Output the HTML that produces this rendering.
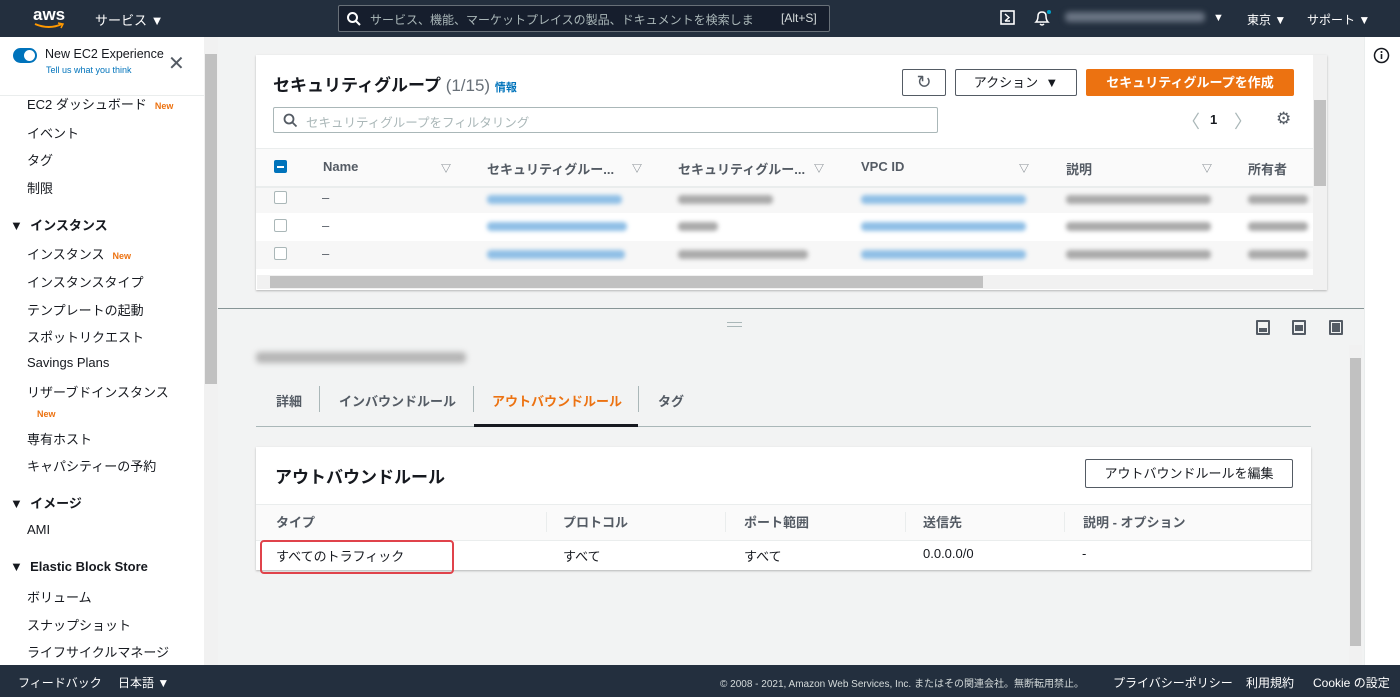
<!DOCTYPE html><html><head><meta charset="utf-8"><style>
*{box-sizing:border-box;margin:0;padding:0}
body{width:1400px;height:697px;overflow:hidden;font-family:"Liberation Sans","Noto Sans CJK JP",sans-serif;font-size:13px;color:#16191f;background:#f2f3f3;position:relative}
.a{position:absolute;white-space:nowrap}
.nav{left:0;top:0;width:1400px;height:37px;background:#232f3e;color:#fff}
.foot{left:0;top:665px;width:1400px;height:32px;background:#232f3e;color:#fff;font-size:12px}
.side{left:0;top:37px;width:204px;height:628px;background:#fff}
.side div{position:absolute;left:27px;font-size:13px;color:#16191f;white-space:nowrap}
.side .h{left:10px;font-weight:bold}
.side .new,.new{color:#ec7211;font-size:9px;margin-left:8px;font-weight:bold}
.card{background:#fff;box-shadow:0 1px 2px rgba(0,0,0,.25)}
.btn{position:absolute;border:1px solid #545b64;background:#fff;border-radius:2px;font-size:13px;font-weight:bold;color:#545b64;text-align:center}
.th{position:absolute;top:159px;font-weight:bold;color:#545b64;font-size:13px;white-space:nowrap}
.blur{position:absolute;height:9px;border-radius:4px;filter:blur(2px)}
.cb{position:absolute;left:274px;width:13px;height:13px;border:1px solid #aab7b8;border-radius:2px;background:#fff}
.tab{position:absolute;top:391px;font-weight:bold;color:#545b64;font-size:13px}
.col{position:absolute;top:512px;font-weight:bold;color:#545b64;font-size:13px}
</style></head><body>
<div class="a nav">
 <div class="a" style="left:33px;top:5px;font-size:17px;font-weight:bold">aws</div>
 <svg class="a" style="left:33px;top:22px" width="32" height="8"><path d="M2 2 Q16 8 29 2" stroke="#ff9900" stroke-width="2" fill="none"/><path d="M25 1 L30 2 L28 6" stroke="#ff9900" stroke-width="1.5" fill="none"/></svg>
 <div class="a" style="left:95px;top:10px;font-size:13px">サービス ▼</div>
 <div class="a" style="left:338px;top:5px;width:492px;height:27px;border:1px solid #687078;border-radius:2px;background:#161e2d"></div>
 <svg class="a" style="left:346px;top:11px" width="16" height="16"><circle cx="6.5" cy="6.5" r="4.5" stroke="#fff" stroke-width="2" fill="none"/><path d="M10 10 L14 14" stroke="#fff" stroke-width="2"/></svg>
 <div class="a" style="left:370px;top:11px;font-size:12px;color:#aab7b8;width:405px;overflow:hidden">サービス、機能、マーケットプレイスの製品、ドキュメントを検索しま</div>
 <div class="a" style="left:781px;top:11px;font-size:12px;color:#d5dbdb">[Alt+S]</div>
 <svg class="a" style="left:1000px;top:10px" width="16" height="16"><rect x="1" y="1" width="13" height="13" stroke="#fff" stroke-width="1.6" fill="none"/><path d="M5 4 L9 7.5 L5 11 M5 11h5" stroke="#fff" stroke-width="1.4" fill="none"/></svg>
 <svg class="a" style="left:1032px;top:8px" width="20" height="20"><path d="M4 14 Q6 12 6 8 Q6 4 10 4 Q14 4 14 8 Q14 12 16 14 Z M8 16 Q10 18 12 16" stroke="#fff" stroke-width="1.5" fill="none"/><circle cx="17" cy="4" r="2" fill="#00a1c9"/></svg>
 <div class="a" style="left:1065px;top:12px;width:140px;height:10px;background:#6b7584;filter:blur(3px);border-radius:4px"></div>
 <div class="a" style="left:1213px;top:12px;font-size:11px">▼</div>
 <div class="a" style="left:1247px;top:11px;font-size:12px">東京 ▼</div>
 <div class="a" style="left:1307px;top:11px;font-size:12px">サポート ▼</div>
</div>
<div class="a side">
 <div style="left:13px;top:11px;width:24px;height:15px;background:#0073bb;border-radius:8px"><span style="position:absolute;right:2px;top:2px;width:11px;height:11px;border-radius:50%;background:#fff"></span></div>
 <div style="left:45px;top:10px;font-size:12.5px">New EC2 Experience</div>
 <div style="left:46px;top:28px;font-size:9px;color:#0073bb">Tell us what you think</div>
 <div style="left:168px;top:14px;font-size:20px;color:#545b64">✕</div>
 <div style="left:0;top:58px;width:204px;height:1px;background:#eaeded"></div>
 <div style="top:57px">EC2 ダッシュボード<span class="new">New</span></div>
 <div style="top:86px">イベント</div>
 <div style="top:113px">タグ</div>
 <div style="top:141px">制限</div>
 <div class="h" style="top:178px">▼ &nbsp;インスタンス</div>
 <div style="top:207px">インスタンス<span class="new">New</span></div>
 <div style="top:235px">インスタンスタイプ</div>
 <div style="top:263px">テンプレートの起動</div>
 <div style="top:290px">スポットリクエスト</div>
 <div style="top:318px">Savings Plans</div>
 <div style="top:345px">リザーブドインスタンス</div>
 <div style="top:368px;left:29px"><span class="new">New</span></div>
 <div style="top:392px">専有ホスト</div>
 <div style="top:419px">キャパシティーの予約</div>
 <div class="h" style="top:456px">▼ &nbsp;イメージ</div>
 <div style="top:485px">AMI</div>
 <div class="h" style="top:522px">▼ &nbsp;Elastic Block Store</div>
 <div style="top:550px">ボリューム</div>
 <div style="top:578px">スナップショット</div>
 <div style="top:605px">ライフサイクルマネージ</div>
</div>
<div class="a" style="left:204px;top:37px;width:14px;height:628px;background:#f1f1f1"></div>
<div class="a" style="left:205px;top:54px;width:12px;height:330px;background:#c1c1c1"></div>
<div class="a" style="left:1364px;top:37px;width:36px;height:628px;background:#fff;border-left:1px solid #eaeded"></div>
<svg class="a" style="left:1373px;top:47px" width="17" height="17"><circle cx="8.5" cy="8.5" r="7" stroke="#16191f" stroke-width="1.5" fill="none"/><rect x="7.7" y="7" width="1.6" height="5" fill="#16191f"/><circle cx="8.5" cy="5" r="1" fill="#16191f"/></svg>
<div class="a card" style="left:256px;top:55px;width:1071px;height:235px"></div>
<div class="a" style="left:1313px;top:55px;width:14px;height:235px;background:#f1f1f1"></div>
<div class="a" style="left:1314px;top:100px;width:12px;height:86px;background:#c1c1c1"></div>
<div class="a" style="left:273px;top:71px;font-size:17px;font-weight:bold">セキュリティグループ <span style="font-weight:normal;color:#687078">(1/15)</span> <span style="font-size:11px;color:#0073bb">情報</span></div>
<div class="btn" style="left:902px;top:69px;width:44px;height:27px;line-height:25px;font-size:18px;font-weight:normal">↻</div>
<div class="btn" style="left:955px;top:69px;width:122px;height:27px;line-height:25px;font-weight:normal;color:#16191f">アクション &nbsp;▼</div>
<div class="btn" style="left:1086px;top:69px;width:208px;height:27px;line-height:25px;background:#ec7211;border-color:#ec7211;color:#fff">セキュリティグループを作成</div>
<div class="a" style="left:273px;top:107px;width:665px;height:26px;border:1px solid #aab7b8;border-radius:2px;background:#fff"></div>
<svg class="a" style="left:283px;top:113px" width="15" height="15"><circle cx="6" cy="6" r="4.5" stroke="#545b64" stroke-width="1.8" fill="none"/><path d="M9.5 9.5 L13.5 13.5" stroke="#545b64" stroke-width="1.8"/></svg>
<div class="a" style="left:306px;top:112px;font-size:12.5px;color:#aab7b8">セキュリティグループをフィルタリング</div>
<div class="a" style="left:1182px;top:108px;font-size:18px;color:#aab7b8">〈</div>
<div class="a" style="left:1210px;top:112px;font-weight:bold;font-size:13px">1</div>
<div class="a" style="left:1234px;top:108px;font-size:18px;color:#aab7b8">〉</div>
<div class="a" style="left:1276px;top:109px;font-size:17px;color:#545b64">⚙</div>
<div class="a" style="left:256px;top:148px;width:1057px;height:40px;background:#fafafa;border-bottom:2px solid #eaeded;border-top:1px solid #eaeded"></div>
<div class="a" style="left:274px;top:160px;width:13px;height:13px;background:#0073bb;border-radius:2px"><span style="position:absolute;left:3px;top:5.5px;width:7px;height:2px;background:#fff"></span></div>
<div class="th" style="left:323px">Name</div><div class="a" style="left:441px;top:160px;font-size:10px;color:#687078">▽</div>
<div class="th" style="left:487px">セキュリティグルー...</div><div class="a" style="left:632px;top:160px;font-size:10px;color:#687078">▽</div>
<div class="th" style="left:678px">セキュリティグルー...</div><div class="a" style="left:814px;top:160px;font-size:10px;color:#687078">▽</div>
<div class="th" style="left:861px">VPC ID</div><div class="a" style="left:1019px;top:160px;font-size:10px;color:#687078">▽</div>
<div class="th" style="left:1066px">説明</div><div class="a" style="left:1202px;top:160px;font-size:10px;color:#687078">▽</div>
<div class="th" style="left:1248px">所有者</div>
<div class="a" style="left:256px;top:213px;width:1057px;height:28px;background:#fff"></div>
<div class="a" style="left:256px;top:188px;width:1057px;height:25px;background:#f7f7f7"></div>
<div class="a" style="left:256px;top:241px;width:1057px;height:28px;background:#f7f7f7"></div>
<div class="cb" style="top:191px"></div><div class="cb" style="top:219px"></div><div class="cb" style="top:247px"></div>
<div class="a" style="left:322px;top:190px;color:#545b64">–</div><div class="a" style="left:322px;top:218px;color:#545b64">–</div><div class="a" style="left:322px;top:246px;color:#545b64">–</div>
<div class="blur" style="left:487px;top:195px;width:135px;background:#8fbfe6"></div>
<div class="blur" style="left:487px;top:222px;width:140px;background:#8fbfe6"></div>
<div class="blur" style="left:487px;top:250px;width:138px;background:#8fbfe6"></div>
<div class="blur" style="left:678px;top:195px;width:95px;background:#aaa"></div>
<div class="blur" style="left:678px;top:222px;width:40px;background:#aaa"></div>
<div class="blur" style="left:678px;top:250px;width:130px;background:#aaa"></div>
<div class="blur" style="left:861px;top:195px;width:165px;background:#8fbfe6"></div>
<div class="blur" style="left:861px;top:222px;width:165px;background:#8fbfe6"></div>
<div class="blur" style="left:861px;top:250px;width:165px;background:#8fbfe6"></div>
<div class="blur" style="left:1066px;top:195px;width:145px;background:#aaa"></div>
<div class="blur" style="left:1066px;top:222px;width:145px;background:#aaa"></div>
<div class="blur" style="left:1066px;top:250px;width:145px;background:#aaa"></div>
<div class="blur" style="left:1248px;top:195px;width:60px;background:#aaa"></div>
<div class="blur" style="left:1248px;top:222px;width:60px;background:#aaa"></div>
<div class="blur" style="left:1248px;top:250px;width:60px;background:#aaa"></div>
<div class="a" style="left:257px;top:275px;width:1056px;height:14px;background:#f1f1f1"></div>
<div class="a" style="left:270px;top:276px;width:713px;height:12px;background:#c1c1c1"></div>
<div class="a" style="left:218px;top:308px;width:1146px;height:1px;background:#879596"></div>
<div class="a" style="left:727px;top:322px;width:15px;height:5px;border-top:1px solid #aab7b8;border-bottom:1px solid #aab7b8"></div>
<div class="a" style="left:1256px;top:320px;width:14px;height:15px;border:2px solid #545b64;border-radius:1px"><span style="position:absolute;left:1px;bottom:1px;width:8px;height:4px;background:#545b64"></span></div>
<div class="a" style="left:1292px;top:320px;width:14px;height:15px;border:2px solid #545b64;border-radius:1px"><span style="position:absolute;left:1px;top:3px;width:8px;height:6px;background:#545b64"></span></div>
<div class="a" style="left:1329px;top:320px;width:14px;height:15px;border:2px solid #545b64;border-radius:1px"><span style="position:absolute;left:1px;top:1px;width:8px;height:9px;background:#545b64"></span></div>
<div class="a" style="left:1349px;top:345px;width:13px;height:320px;background:#f1f1f1"></div>
<div class="a" style="left:1350px;top:358px;width:11px;height:288px;background:#c1c1c1"></div>
<div class="a" style="left:256px;top:352px;width:210px;height:11px;background:#b5b5b5;filter:blur(3px);border-radius:4px"></div>
<div class="a" style="left:256px;top:426px;width:1055px;height:1px;background:#aab7b8"></div>
<div class="tab" style="left:276px">詳細</div>
<div class="a" style="left:319px;top:386px;width:1px;height:26px;background:#aab7b8"></div>
<div class="tab" style="left:339px">インバウンドルール</div>
<div class="a" style="left:473px;top:386px;width:1px;height:26px;background:#aab7b8"></div>
<div class="tab" style="left:492px;color:#ec7211">アウトバウンドルール</div>
<div class="a" style="left:474px;top:424px;width:164px;height:3px;background:#16191f"></div>
<div class="a" style="left:638px;top:386px;width:1px;height:26px;background:#aab7b8"></div>
<div class="tab" style="left:658px">タグ</div>
<div class="a card" style="left:256px;top:447px;width:1055px;height:123px"></div>
<div class="a" style="left:275px;top:463px;font-size:17px;font-weight:bold">アウトバウンドルール</div>
<div class="btn" style="left:1085px;top:459px;width:208px;height:29px;line-height:27px;color:#16191f;font-weight:normal">アウトバウンドルールを編集</div>
<div class="a" style="left:256px;top:504px;width:1055px;height:37px;background:#fafafa;border-top:1px solid #eaeded;border-bottom:1px solid #eaeded"></div>
<div class="col" style="left:276px">タイプ</div>
<div class="a" style="left:546px;top:512px;width:1px;height:20px;background:#eaeded"></div>
<div class="col" style="left:563px">プロトコル</div>
<div class="a" style="left:725px;top:512px;width:1px;height:20px;background:#eaeded"></div>
<div class="col" style="left:744px">ポート範囲</div>
<div class="a" style="left:905px;top:512px;width:1px;height:20px;background:#eaeded"></div>
<div class="col" style="left:923px">送信先</div>
<div class="a" style="left:1064px;top:512px;width:1px;height:20px;background:#eaeded"></div>
<div class="col" style="left:1083px">説明 - オプション</div>
<div class="a" style="left:276px;top:546px">すべてのトラフィック</div>
<div class="a" style="left:563px;top:546px">すべて</div>
<div class="a" style="left:744px;top:546px">すべて</div>
<div class="a" style="left:923px;top:546px">0.0.0.0/0</div>
<div class="a" style="left:1082px;top:546px">-</div>
<div class="a" style="left:260px;top:540px;width:194px;height:34px;border:2px solid #e0434b;border-radius:4px"></div>
<div class="a foot">
 <div class="a" style="left:18px;top:9px">フィードバック</div>
 <div class="a" style="left:118px;top:9px">日本語 ▼</div>
 <div class="a" style="left:720px;top:10px;font-size:10px;color:#d5dbdb">© 2008 - 2021, Amazon Web Services, Inc. またはその関連会社。無断転用禁止。</div>
 <div class="a" style="left:1113px;top:9px">プライバシーポリシー</div>
 <div class="a" style="left:1246px;top:9px">利用規約</div>
 <div class="a" style="left:1313px;top:9px">Cookie の設定</div>
</div>
</body></html>
